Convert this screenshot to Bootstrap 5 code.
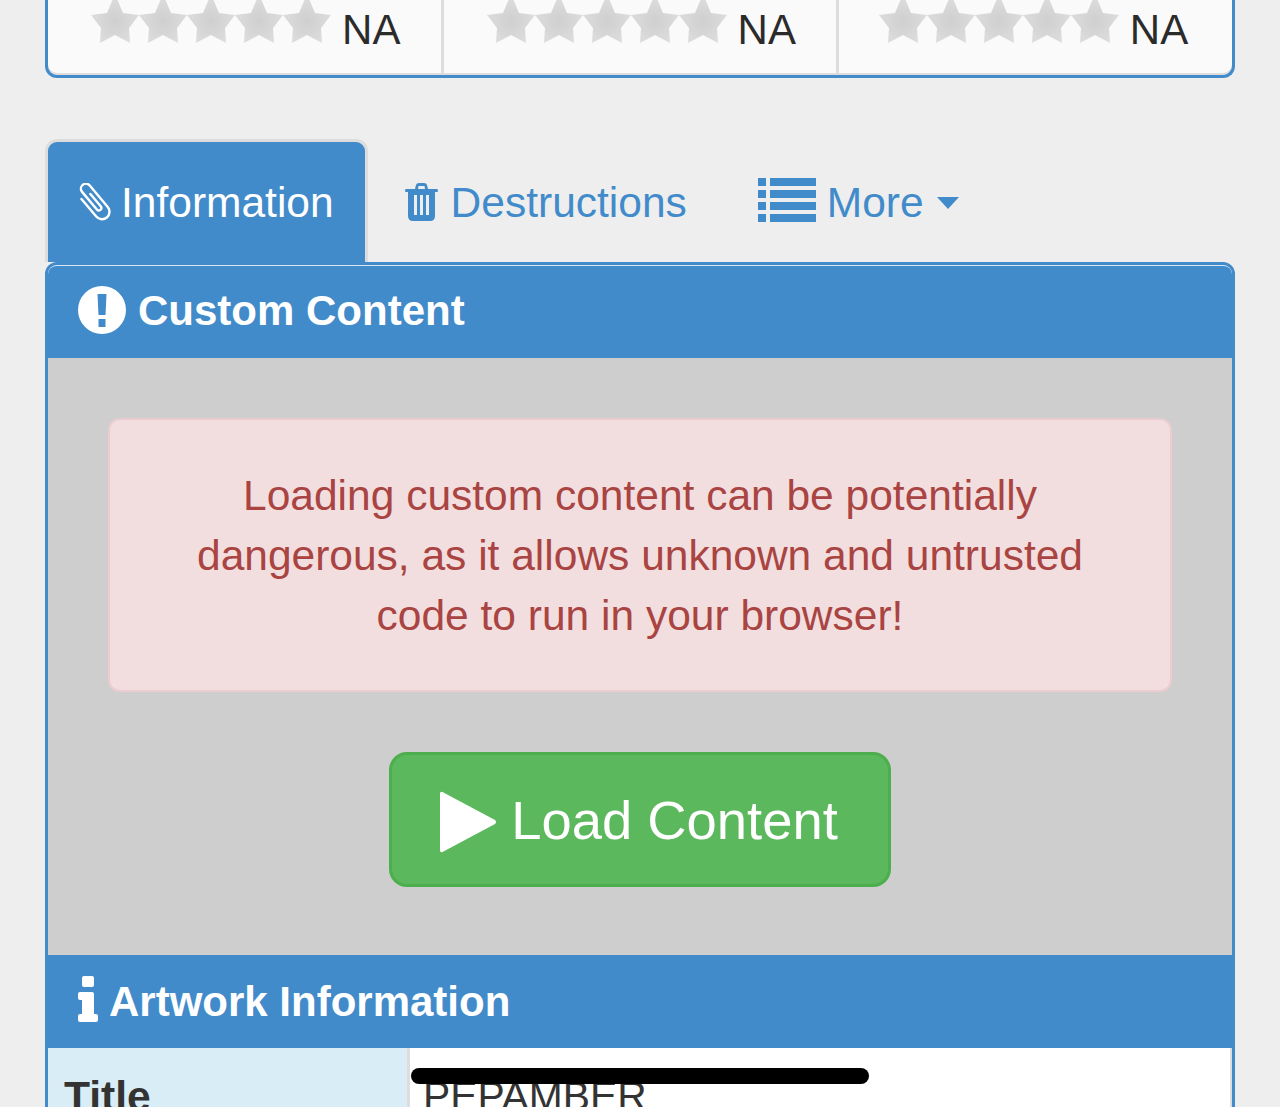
<!DOCTYPE html>
<html lang="en">
<head>
    <meta charset="UTF-8">
    <meta name="viewport" content="width=device-width, initial-scale=1.0">
    <title>Artwork</title>
    <link href="https://cdn.jsdelivr.net/npm/bootstrap@5.3.0/dist/css/bootstrap.min.css" rel="stylesheet">
    <style>
        html, body {
            height: 100%;
            overflow: hidden;
        }
        body {
            background: #eeeeee;
            color: #333333;
            font-family: "Liberation Sans", Arial, sans-serif;
            font-size: 42px;
            line-height: 60px;
        }
        .page-wrap {
            padding: 0 45px;
        }
        .rating-panel {
            height: 78px;
            border: 3px solid #428bca;
            border-top: 0;
            border-radius: 0 0 12px 12px;
            overflow: hidden;
            background: #fafafa;
            box-shadow: inset 0 -2px 0 #dddddd;
        }
        .rating-cell {
            width: 395.5px;
            height: 75px;
            padding-left: 3px;
            padding-bottom: 15px;
            border-right: 3px solid #dddddd;
            gap: 11px;
        }
        .rating-cell:last-child {
            width: 393px;
            padding-left: 0;
            padding-right: 4px;
            border-right: 0;
        }
        .rating-stars {
            width: 240px;
            height: 48px;
            overflow: visible;
            align-self: flex-start;
        }
        .rating-value {
            color: #2b2b2b;
        }
        .art-tabs {
            margin-top: 61px;
            padding-left: 0;
            border-bottom: 0;
        }
        .art-tabs .nav-item + .nav-item {
            margin-left: 4px;
        }
        .art-tabs .nav-link {
            height: 123px;
            padding: 31px 30px 29px;
            border: 3px solid transparent;
            border-bottom: 0;
            border-radius: 12px 12px 0 0;
            margin: 0;
            color: #428bca;
            font-size: 42.5px;
            line-height: 60px;
        }
        .art-tabs .nav-link.active {
            padding-right: 31px;
            background: #428bca;
            border-color: #dddddd;
            color: #ffffff;
        }
        .art-tabs .more-link {
            padding-left: 31px;
        }
        .icon-clip {
            width: 34px;
            height: 38px;
            margin-right: 9px;
            margin-bottom: 2px;
        }
        .icon-trash {
            width: 33px;
            height: 38px;
            margin-right: 13px;
            margin-bottom: 2px;
            fill: #428bca;
        }
        .icon-list {
            width: 58px;
            height: 46px;
            margin-right: 11px;
            margin-bottom: 6px;
            fill: #428bca;
        }
        .more-caret {
            width: 0;
            height: 0;
            margin-left: 13px;
            border-top: 12px solid #428bca;
            border-left: 11.5px solid transparent;
            border-right: 11.5px solid transparent;
        }
        .art-card {
            border: 3px solid #428bca;
            border-radius: 12px 12px 0 0;
            background: #cecece;
        }
        .art-head {
            background: #428bca;
            color: #ffffff;
            font-weight: 700;
            padding: 15px 30px 17px;
        }
        .art-head-top {
            border-top: 1px solid #d5e5f3;
            border-radius: 9px 9px 0 0;
            height: 93px;
        }
        .art-head-info {
            height: 93px;
            padding-top: 16px;
            padding-bottom: 16px;
        }
        .art-head-info svg {
            width: 20px;
            height: 46px;
            margin-right: 11px;
            margin-bottom: 6px;
            fill: #ffffff;
        }
        .art-head-top svg {
            width: 48px;
            height: 48px;
            margin-right: 12px;
            margin-bottom: 2px;
            fill: #ffffff;
        }
        .art-body {
            padding: 60px 60px 68px;
        }
        .warn-box {
            margin: 0 0 60px;
            padding: 46px 30px 44px;
            border: 2px solid #ebccd1;
            border-radius: 12px;
            background: #f2dede;
            color: #a94442;
            font-size: 42.5px;
            text-align: center;
        }
        .load-btn {
            width: 502px;
            height: 135px;
            padding: 4px 3px 0 0;
            background: #5cb85c;
            border: 3px solid #4cae4c;
            border-radius: 18px;
            color: #ffffff;
            font-size: 54.4px;
            line-height: 1;
        }
        .load-btn svg {
            width: 58px;
            height: 62px;
            margin-right: 14px;
            fill: #ffffff;
        }
        .info-table {
            margin: 0;
            background: #ffffff;
        }
        .info-table th, .info-table td {
            padding: 18px 15px 18px 13.5px;
            border: 0;
            color: #333333;
            line-height: 60px;
            vertical-align: top;
        }
        .info-table th {
            width: 360px;
            padding-left: 16px;
            background: #d9edf7;
            border-right: 3px solid #dddddd;
            font-size: 42.6px;
        }
        .info-table td {
            background: #ffffff;
            border-right: 2px solid #dddddd;
            font-size: 40.8px;
            position: relative;
        }
        .redact-bar {
            position: absolute;
            left: 1px;
            top: 20px;
            width: 458px;
            height: 16px;
            background: #000000;
            border-radius: 8px;
        }
    </style>
</head>
<body>
    <div class="page-wrap">
        <svg width="0" height="0" class="d-block position-absolute">
            <defs>
                <radialGradient id="star-shade" cx="50%" cy="55%" r="55%">
                    <stop offset="0%" stop-color="#cfcfcf"></stop>
                    <stop offset="100%" stop-color="#dedede"></stop>
                </radialGradient>
                <filter id="star-soft" x="-10%" y="-10%" width="120%" height="120%">
                    <feGaussianBlur stdDeviation="0.7"></feGaussianBlur>
                </filter>
                <polygon id="one-star" points="24,-6 32,13 48,15 38,28 39,43 24,35 9,43 10,28 0,15 16,13" fill="url(#star-shade)" filter="url(#star-soft)"></polygon>
                <g id="five-stars">
                    <use href="#one-star"></use>
                    <use href="#one-star" x="48"></use>
                    <use href="#one-star" x="96"></use>
                    <use href="#one-star" x="144"></use>
                    <use href="#one-star" x="192"></use>
                </g>
            </defs>
        </svg>

        <div class="row g-0 rating-panel">
            <div class="rating-cell d-flex justify-content-center align-items-end">
                <svg class="rating-stars" viewBox="0 0 240 48"><use href="#five-stars"></use></svg>
                <span class="rating-value">NA</span>
            </div>
            <div class="rating-cell d-flex justify-content-center align-items-end">
                <svg class="rating-stars" viewBox="0 0 240 48"><use href="#five-stars"></use></svg>
                <span class="rating-value">NA</span>
            </div>
            <div class="rating-cell d-flex justify-content-center align-items-end">
                <svg class="rating-stars" viewBox="0 0 240 48"><use href="#five-stars"></use></svg>
                <span class="rating-value">NA</span>
            </div>
        </div>

        <ul class="nav nav-tabs art-tabs">
            <li class="nav-item">
                <a class="nav-link active d-flex align-items-center" href="#">
                    <svg class="icon-clip" viewBox="0 0 34 38" fill="none" stroke="#ffffff" stroke-width="2.4" stroke-linecap="round">
                        <path transform="translate(15 18) rotate(-40)" d="M2.500 -7 V9 a2.500 2.500 0 0 1 -5 0 V-14 a5 5 0 0 1 10 0 V14 a7.500 7.500 0 0 1 -15 0 V-9"></path>
                    </svg>
                    Information
                </a>
            </li>
            <li class="nav-item">
                <a class="nav-link d-flex align-items-center" href="#">
                    <svg class="icon-trash" viewBox="0 0 33 38">
                        <path fill-rule="evenodd" d="M10 6 L11 2 Q11.500 0 14 0 H19 Q21.500 0 22 2 L23 6 H32 Q33 6 33 7.500 Q33 9 32 9 H30 V33 Q30 38 25 38 H8 Q3 38 3 33 V9 H1 Q0 9 0 7.500 Q0 6 1 6 Z M13 6 H20 L19.500 3 H13.500 Z M9 12 V32 H12 V12 Z M15 12 V32 H18 V12 Z M21 12 V32 H24 V12 Z"></path>
                    </svg>
                    Destructions
                </a>
            </li>
            <li class="nav-item">
                <a class="nav-link more-link d-flex align-items-center" href="#">
                    <svg class="icon-list" viewBox="0 0 58 46">
                        <rect x="0" y="1" width="8" height="8"></rect><rect x="12" y="1" width="46" height="8"></rect>
                        <rect x="0" y="13" width="8" height="8"></rect><rect x="12" y="13" width="46" height="8"></rect>
                        <rect x="0" y="25" width="8" height="8"></rect><rect x="12" y="25" width="46" height="8"></rect>
                        <rect x="0" y="37" width="8" height="8"></rect><rect x="12" y="37" width="46" height="8"></rect>
                    </svg>
                    More
                    <span class="more-caret"></span>
                </a>
            </li>
        </ul>

        <div class="art-card">
            <div class="art-head art-head-top d-flex align-items-center">
                <svg viewBox="0 0 48 48">
                    <path fill-rule="evenodd" d="M24 0 A24 24 0 1 1 24 48 A24 24 0 1 1 24 0 Z M19.500 8 L20.500 29 H27.500 L28.500 8 Z M20.500 33 V41 H27.500 V33 Z"></path>
                </svg>
                Custom Content
            </div>
            <div class="art-body">
                <div class="alert warn-box" role="alert">
                    Loading custom content can be potentially<br>dangerous, as it allows unknown and untrusted<br>code to run in your browser!
                </div>
                <div class="text-center">
                    <button type="button" class="btn btn-success load-btn d-inline-flex align-items-center justify-content-center">
                        <svg viewBox="0 0 58 62">
                            <path d="M1 3 Q1 0 3.500 1 L56 29 Q58 31 56 33 L3.500 61 Q1 62 1 59 Z"></path>
                        </svg>
                        Load Content
                    </button>
                </div>
            </div>
            <div class="art-head art-head-info d-flex align-items-center">
                <svg viewBox="0 0 20 46">
                    <path d="M6 0 H14 Q16 0 16 2 V9 Q16 11 14 11 H6 Q4 11 4 9 V2 Q4 0 6 0 Z M2 16 H14 Q16 16 16 18 V38 H18 Q20 38 20 40 V44 Q20 46 18 46 H2 Q0 46 0 44 V40 Q0 38 2 38 H4 V24 H2 Q0 24 0 22 V18 Q0 16 2 16 Z"></path>
                </svg>
                Artwork Information
            </div>
            <table class="table info-table">
                <tbody>
                    <tr>
                        <th scope="row">Title</th>
                        <td>PEPAMBER<span class="redact-bar"></span></td>
                    </tr>
                </tbody>
            </table>
        </div>
    </div>
    <script src="https://cdn.jsdelivr.net/npm/bootstrap@5.3.0/dist/js/bootstrap.bundle.min.js"></script>
</body>
</html>
